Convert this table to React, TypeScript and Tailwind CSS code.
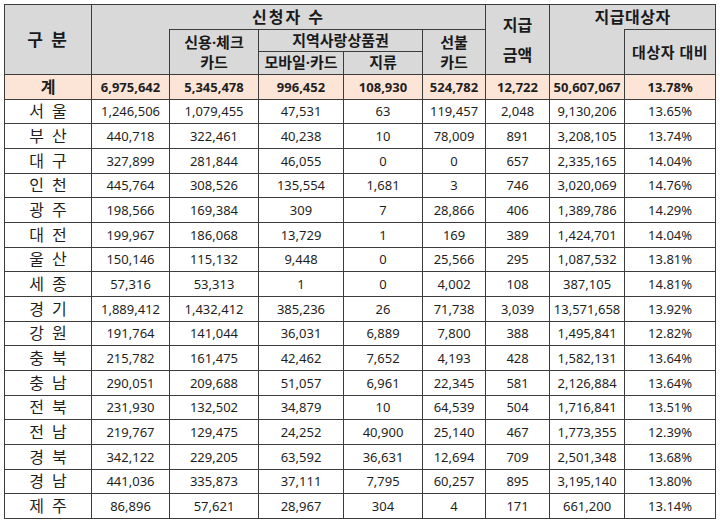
const rows: string[][] = [
  ["서 울", "1,246,506", "1,079,455", "47,531", "63", "119,457", "2,048", "9,130,206", "13.65%"],
  ["부 산", "440,718", "322,461", "40,238", "10", "78,009", "891", "3,208,105", "13.74%"],
  ["대 구", "327,899", "281,844", "46,055", "0", "0", "657", "2,335,165", "14.04%"],
  ["인 천", "445,764", "308,526", "135,554", "1,681", "3", "746", "3,020,069", "14.76%"],
  ["광 주", "198,566", "169,384", "309", "7", "28,866", "406", "1,389,786", "14.29%"],
  ["대 전", "199,967", "186,068", "13,729", "1", "169", "389", "1,424,701", "14.04%"],
  ["울 산", "150,146", "115,132", "9,448", "0", "25,566", "295", "1,087,532", "13.81%"],
  ["세 종", "57,316", "53,313", "1", "0", "4,002", "108", "387,105", "14.81%"],
  ["경 기", "1,889,412", "1,432,412", "385,236", "26", "71,738", "3,039", "13,571,658", "13.92%"],
  ["강 원", "191,764", "141,044", "36,031", "6,889", "7,800", "388", "1,495,841", "12.82%"],
  ["충 북", "215,782", "161,475", "42,462", "7,652", "4,193", "428", "1,582,131", "13.64%"],
  ["충 남", "290,051", "209,688", "51,057", "6,961", "22,345", "581", "2,126,884", "13.64%"],
  ["전 북", "231,930", "132,502", "34,879", "10", "64,539", "504", "1,716,841", "13.51%"],
  ["전 남", "219,767", "129,475", "24,252", "40,900", "25,140", "467", "1,773,355", "12.39%"],
  ["경 북", "342,122", "229,205", "63,592", "36,631", "12,694", "709", "2,501,348", "13.68%"],
  ["경 남", "441,036", "335,873", "37,111", "7,795", "60,257", "895", "3,195,140", "13.80%"],
  ["제 주", "86,896", "57,621", "28,967", "304", "4", "171", "661,200", "13.14%"],
];

const total = ["6,975,642", "5,345,478", "996,452", "108,930", "524,782", "12,722", "50,607,067", "13.78%"];

const widths = [87, 78, 89, 85, 79, 63, 64, 75, 91];

const cell = "border border-[#3c3c3c] p-0 text-center align-middle leading-[20px]";
const head = cell + " bg-[#d9d9d9] font-bold text-[15px] text-[#1a1a1a]";

export default function App() {
  return (
    <div className="w-[720px] h-[522px] bg-white pl-[4px] pt-[4px] font-['Noto_Sans','Noto_Sans_CJK_KR',sans-serif] text-[#1f1f1f]">
      <table className="table-fixed border-collapse w-[712px]">
        <colgroup>
          {widths.map((w, i) => (
            <col key={i} style={{ width: w }} />
          ))}
        </colgroup>
        <thead>
          <tr className="h-[25px]">
            <th rowSpan={3} className={head + " text-[17px] tracking-[2px]"}>구 분</th>
            <th colSpan={5} className={head + " border-b-0 text-[16px] tracking-[2px]"}>신청자 수</th>
            <th rowSpan={3} className={head + " leading-[30px] text-[16px]"}>
              지급
              <br />
              금액
            </th>
            <th colSpan={2} className={head + " border-b-0 text-[16px] tracking-[0.5px]"}>지급대상자</th>
          </tr>
          <tr className="h-[21px]">
            <th rowSpan={2} className={head + " border-t-0"}></th>
            <th rowSpan={2} className={head + " leading-[18px]"}>
              신용·체크
              <br />
              카드
            </th>
            <th colSpan={2} className={head + " leading-[18px] pb-[1px]"}>지역사랑상품권</th>
            <th rowSpan={2} className={head + " leading-[18px]"}>
              선불
              <br />
              카드
            </th>
            <th rowSpan={2} className={head + " border-t-0"}></th>
            <th rowSpan={2} className={head + " text-[15px] tracking-[0.5px]"}>대상자 대비</th>
          </tr>
          <tr className="h-[22px]">
            <th className={head + " leading-[18px] pb-[2px]"}>모바일·카드</th>
            <th className={head + " leading-[18px] pb-[2px]"}>지류</th>
          </tr>
        </thead>
        <tbody>
          <tr className="h-[24.67px] bg-[#fce4d6]">
            <td className={cell + " font-bold text-[16px]"}>계</td>
            {total.map((v, i) => (
              <td key={i} className={cell + " font-bold text-[13px]"}>
                {v}
              </td>
            ))}
          </tr>
          {rows.map((r) => (
            <tr key={r[0]} className="h-[24.67px]">
              <td className={cell + " text-[16px] tracking-[2px] pl-[2px]"}>{r[0]}</td>
              {r.slice(1).map((v, i) => (
                <td key={i} className={cell + " text-[13px]"}>
                  {v}
                </td>
              ))}
            </tr>
          ))}
        </tbody>
      </table>
    </div>
  );
}
